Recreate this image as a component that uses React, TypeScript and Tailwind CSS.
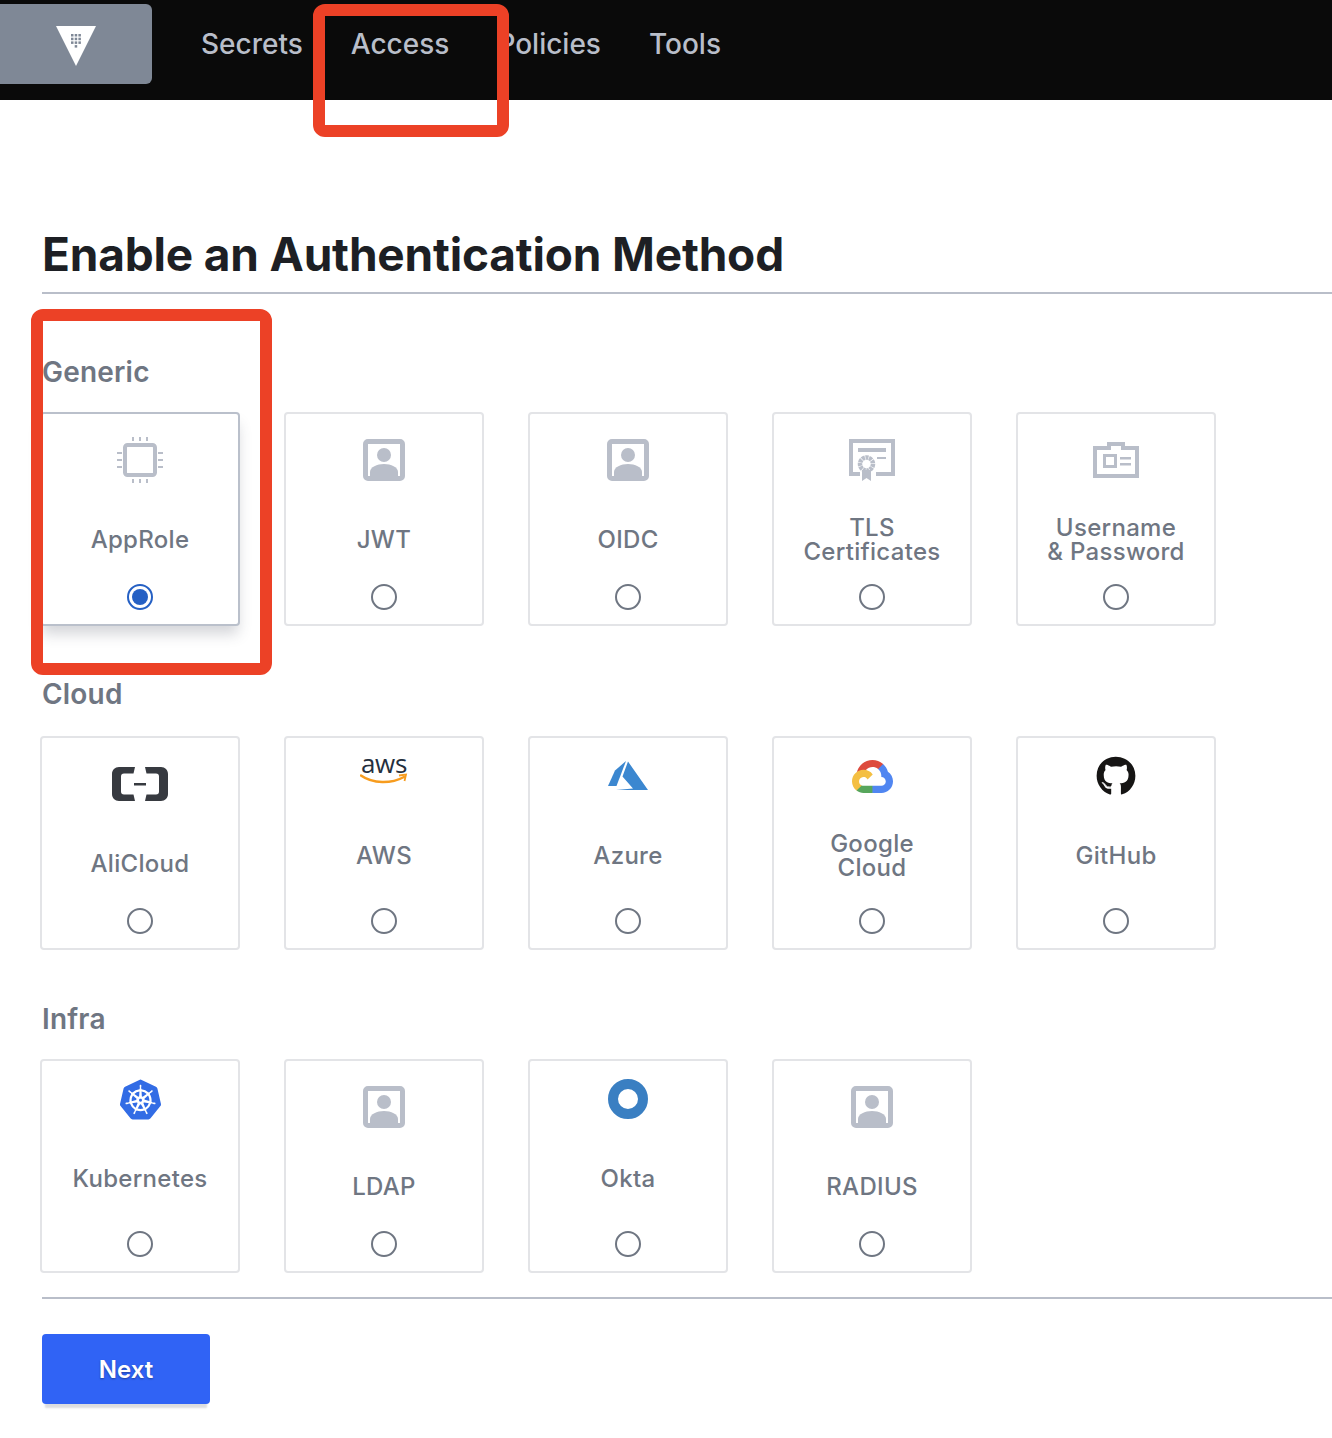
import { FaGithub } from 'react-icons/fa';
import { SiKubernetes } from 'react-icons/si';
import type { ReactNode } from 'react';

const FONT = 'font-["Inter",sans-serif]';

function PersonIcon() {
  return (
    <svg width="42" height="42" viewBox="0 0 42 42">
      <rect x="2.5" y="2.5" width="37" height="37" rx="2.5" fill="none" stroke="#b9bec9" strokeWidth="5" />
      <circle cx="21" cy="16" r="7" fill="#b9bec9" />
      <path d="M7 38v-5c0-5 7-8 14-8s14 3 14 8v5z" fill="#b9bec9" />
    </svg>
  );
}

function ChipIcon() {
  return (
    <svg width="48" height="48" viewBox="0 0 48 48" fill="none" stroke="#b9bec9">
      <rect x="9" y="9" width="30" height="30" rx="2.500" strokeWidth="4" />
      <path d="M17 1v4M24 1v4M31 1v4M17 43v4M24 43v4M31 43v4M1 17h5M1 24h5M1 31h5M42 17h5M42 24h5M42 31h5" strokeWidth="2" />
    </svg>
  );
}

function CertIcon() {
  return (
    <svg width="46" height="42" viewBox="0 0 46 42">
      <path d="M0 0h46v37H27v-4h15V4H4v29h7v4H0z" fill="#b9bec9" />
      <path d="M9 9h28v4H9zM28 18h9v2h-9z" fill="#b9bec9" />
      <circle cx="17.500" cy="25" r="6.500" fill="none" stroke="#b9bec9" strokeWidth="4.500" strokeDasharray="3 0.600" />
      <path d="M13 31h9v11l-4.500-3-4.500 3z" fill="#b9bec9" />
    </svg>
  );
}

function IdIcon() {
  return (
    <svg width="46" height="36" viewBox="0 0 46 36">
      <path fillRule="evenodd" d="M0 4h14V0h18v4h14v32H0zM4 8v24h38V8H28V4H18v4z" fill="#b9bec9" />
      <path fillRule="evenodd" d="M10 12h14v14H10zM13 15v8h8v-8z" fill="#b9bec9" />
      <path d="M27 15h11v2.500H27zM27 21h11v2.500H27z" fill="#b9bec9" />
    </svg>
  );
}

function AliIcon() {
  return (
    <svg width="56" height="34" viewBox="0 0 56 34" fill="#373a40">
      <path d="M7 0h16l-1.500 6.500H12c-2 0-3 1-3 3v15c0 2 1 3 3 3h9.500L23 34H7c-4 0-7-3-7-7V7c0-4 3-7 7-7z" />
      <path d="M49 0H33l1.500 6.500H44c2 0 3 1 3 3v15c0 2-1 3-3 3h-9.500L33 34h16c4 0 7-3 7-7V7c0-4-3-7-7-7z" />
      <rect x="22" y="16" width="12" height="2.500" />
    </svg>
  );
}

function AwsIcon() {
  return (
    <div className="relative w-[48px] h-[38px] -mt-[15px]">
      <span className='block text-center text-[26px] leading-[26px] font-medium font-["Open_Sans",sans-serif] text-[#252f3e] tracking-[-0.3px]'>aws</span>
      <svg className="absolute left-0 top-[23px]" width="48" height="12" viewBox="0 0 48 12" fill="none">
        <path d="M1 2.500c12 8.500 30 8.500 43 1.500" stroke="#f79c1e" strokeWidth="2.500" strokeLinecap="round" />
        <path d="M39 2.500l7-1-1.500 6.500" stroke="#f79c1e" strokeWidth="1.800" />
      </svg>
    </div>
  );
}

function AzureIcon() {
  return (
    <svg width="40" height="30" viewBox="0 0 40 30" fill="#3b87d0">
      <path d="M18 0L7 9.500 0 25h8.500z" />
      <path d="M20 0.500L14.500 15.500l10.500 12L8 29h32z" />
    </svg>
  );
}

function GoogleIcon() {
  return (
    <svg width="41" height="33" viewBox="0 0 256 206">
      <path fill="#dd4b3e" d="M170.25 56.82l22.25-22.25 1.49-9.37C153.44-11.68 88.98-7.5 52.42 33.92 42.27 45.42 34.73 59.76 30.72 74.57l7.97-1.12 44.5-7.34 3.44-3.51c19.8-21.74 53.27-24.67 76.13-6.17z" />
      <path fill="#5086f1" d="M224.2 73.92c-5.11-18.84-15.61-35.77-30.21-48.72l-31.23 31.23c13.19 10.77 20.7 27.01 20.38 44.04v5.54c15.35 0 27.8 12.45 27.8 27.8 0 15.35-12.45 27.48-27.8 27.48h-55.67l-5.47 5.93v33.34l5.47 5.23h55.67c39.93.31 72.55-31.49 72.86-71.42.19-24.2-11.74-46.89-31.8-60.45" />
      <path fill="#57a65c" d="M71.87 205.8h55.59v-44.51H71.87c-3.96 0-7.8-.85-11.4-2.5l-7.89 2.42-22.41 22.25-1.95 7.57c12.57 9.49 27.9 14.83 43.65 14.77" />
      <path fill="#f4bf42" d="M71.87 61.43C31.94 61.66-.24 94.23 0 134.16c.13 22.3 10.55 43.29 28.22 56.88l32.25-32.25c-13.99-6.32-20.21-22.78-13.89-36.77 6.32-13.99 22.79-20.21 36.78-13.89 6.16 2.78 11.1 7.72 13.89 13.89l32.25-32.25c-13.72-17.94-35.04-28.42-57.63-28.34" />
    </svg>
  );
}

function OktaIcon() {
  return (
    <svg width="40" height="40" viewBox="0 0 40 40">
      <circle cx="20" cy="20" r="15" fill="none" stroke="#3a7fc2" strokeWidth="10" />
    </svg>
  );
}

function VaultLogo() {
  return (
    <svg className="mt-[4px]" width="40" height="40" viewBox="0 0 40 40">
      <path d="M0 0h40L20 40z" fill="#fff" />
      <g fill="#7f8896">
        <rect x="15" y="8" width="2.500" height="2.500" />
        <rect x="18.700" y="8" width="2.500" height="2.500" />
        <rect x="22.400" y="8" width="2.500" height="2.500" />
        <rect x="15" y="11.700" width="2.500" height="2.500" />
        <rect x="18.700" y="11.700" width="2.500" height="2.500" />
        <rect x="22.400" y="11.700" width="2.500" height="2.500" />
        <rect x="15" y="15.400" width="2.500" height="2.500" />
        <rect x="18.700" y="15.400" width="2.500" height="2.500" />
        <rect x="22.400" y="15.400" width="2.500" height="2.500" />
        <rect x="18.700" y="19.100" width="2.500" height="2.500" />
      </g>
    </svg>
  );
}

type Method = { name: ReactNode; icon: ReactNode; brand?: boolean; selected?: boolean };

const generic: Method[] = [
  { name: 'AppRole', icon: <ChipIcon />, selected: true },
  { name: 'JWT', icon: <PersonIcon /> },
  { name: 'OIDC', icon: <PersonIcon /> },
  { name: <>TLS<br />Certificates</>, icon: <CertIcon /> },
  { name: <>Username<br />&amp; Password</>, icon: <IdIcon /> },
];

const cloud: Method[] = [
  { name: 'AliCloud', icon: <AliIcon /> },
  { name: 'AWS', icon: <AwsIcon />, brand: true },
  { name: 'Azure', icon: <AzureIcon />, brand: true },
  { name: <>Google<br />Cloud</>, icon: <GoogleIcon />, brand: true },
  { name: 'GitHub', icon: <FaGithub size={40} color="#161514" />, brand: true },
];

const infra: Method[] = [
  { name: 'Kubernetes', icon: <SiKubernetes size={41} color="#326ce5" />, brand: true },
  { name: 'LDAP', icon: <PersonIcon /> },
  { name: 'Okta', icon: <OktaIcon />, brand: true },
  { name: 'RADIUS', icon: <PersonIcon /> },
];

function Card({ method }: { method: Method }) {
  return (
    <div
      className={`flex flex-col items-center w-[200px] h-[214px] rounded-[4px] border-2 bg-white ${
        method.brand ? 'pt-[14px]' : 'pt-[22px]'
      } ${method.selected ? 'border-[#bac0cb] shadow-[0_10px_14px_-2px_rgba(60,65,80,0.22)]' : 'border-[#e3e4e7]'}`}
    >
      <div className="flex items-center justify-center h-[48px]">{method.icon}</div>
      <div className="flex items-center justify-center h-[48px] mt-[32px] text-center text-[24px] leading-[24px] font-medium tracking-[0.3px] text-[#6f7682]">
        <span>{method.name}</span>
      </div>
      <div className="mt-auto mb-[14px]">
        {method.selected ? (
          <div className="flex items-center justify-center w-[26px] h-[26px] rounded-full border-2 border-[#2560c4]">
            <div className="w-[16px] h-[16px] rounded-full bg-[#2560c4]" />
          </div>
        ) : (
          <div className="w-[26px] h-[26px] rounded-full border-2 border-[#6f7682]" />
        )}
      </div>
    </div>
  );
}

function Group({ title, items, className, rowClass }: { title: string; items: Method[]; className: string; rowClass: string }) {
  return (
    <section className={className}>
      <h2 className="h-[34px] text-[28px] leading-[34px] font-semibold tracking-[0.2px] text-[#6f7682]">{title}</h2>
      <div className={`flex gap-[44px] -ml-[2px] ${rowClass}`}>
        {items.map((m, i) => (
          <Card key={i} method={m} />
        ))}
      </div>
    </section>
  );
}

export default function App() {
  return (
    <div className={`relative w-[1332px] h-[1438px] overflow-hidden bg-white ${FONT}`}>
      <nav className="flex items-start h-[100px] bg-[#0a0a0a] pt-[4px]">
        <div className="flex items-center justify-center w-[152px] h-[80px] rounded-r-[6px] bg-[#7f8896]">
          <VaultLogo />
        </div>
        <div className="flex gap-[48px] ml-[49px] pt-[22px] text-[28px] leading-[36px] font-medium tracking-[0px] text-[#b9bec9]">
          <span>Secrets</span>
          <span>Access</span>
          <span>Policies</span>
          <span>Tools</span>
        </div>
      </nav>

      <main className="pl-[42px]">
        <h1 className="mt-[125px] h-[58px] text-[46px] leading-[58px] font-bold tracking-[-0.18px] text-[#1d1f24]">
          Enable an Authentication Method
        </h1>
        <div className="h-[2px] mt-[9px] bg-[#b9bec9]" />

        <Group title="Generic" items={generic} className="mt-[61px]" rowClass="mt-[23px]" />
        <Group title="Cloud" items={cloud} className="mt-[51px]" rowClass="mt-[25px]" />
        <Group title="Infra" items={infra} className="mt-[52px]" rowClass="mt-[23px]" />

        <div className="h-[2px] mt-[24px] bg-[#b9bec9]" />
        <button className="block mt-[35px] w-[168px] h-[70px] pt-[2px] rounded-[4px] bg-[#3063f5] text-[24px] font-semibold text-white shadow-[0_7px_2px_-3px_rgba(60,65,80,0.18)] [text-shadow:0_1px_2px_rgba(0,0,0,0.35)]">
          Next
        </button>
      </main>

      {/* annotations drawn over the screenshot */}
      <div className="absolute left-[313px] top-[4px] w-[196px] h-[133px] rounded-[12px] border-[12px] border-[#ec4126]" />
      <div className="absolute left-[31px] top-[309px] w-[241px] h-[366px] rounded-[12px] border-[12px] border-[#ec4126]" />
    </div>
  );
}
